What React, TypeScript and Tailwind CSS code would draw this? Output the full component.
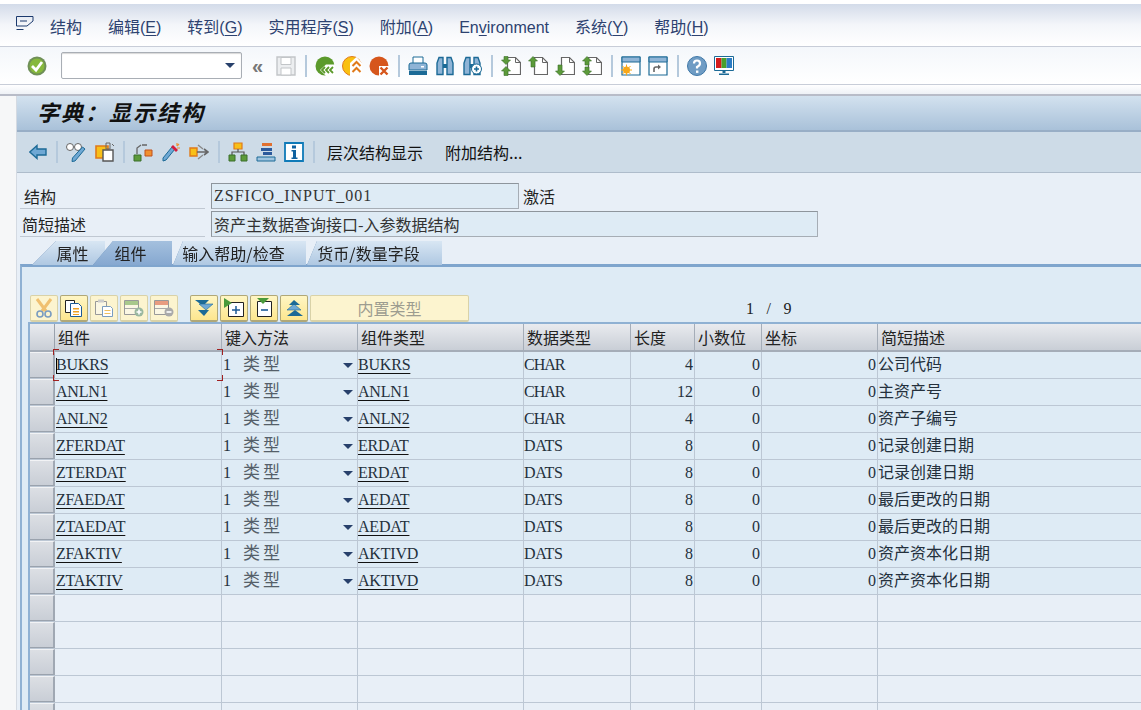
import * as React from "react"

const serif = "font-['Liberation_Serif','Noto_Sans_CJK_SC',serif]"

const rows = [
	{ name: "BUKRS", type: "BUKRS", dt: "CHAR", len: "4", desc: "公司代码" },
	{ name: "ANLN1", type: "ANLN1", dt: "CHAR", len: "12", desc: "主资产号" },
	{ name: "ANLN2", type: "ANLN2", dt: "CHAR", len: "4", desc: "资产子编号" },
	{ name: "ZFERDAT", type: "ERDAT", dt: "DATS", len: "8", desc: "记录创建日期" },
	{ name: "ZTERDAT", type: "ERDAT", dt: "DATS", len: "8", desc: "记录创建日期" },
	{ name: "ZFAEDAT", type: "AEDAT", dt: "DATS", len: "8", desc: "最后更改的日期" },
	{ name: "ZTAEDAT", type: "AEDAT", dt: "DATS", len: "8", desc: "最后更改的日期" },
	{ name: "ZFAKTIV", type: "AKTIVD", dt: "DATS", len: "8", desc: "资产资本化日期" },
	{ name: "ZTAKTIV", type: "AKTIVD", dt: "DATS", len: "8", desc: "资产资本化日期" },
]

const menus = [
	{ a: "结构", k: "", b: "" },
	{ a: "编辑(", k: "E", b: ")" },
	{ a: "转到(", k: "G", b: ")" },
	{ a: "实用程序(", k: "S", b: ")" },
	{ a: "附加(", k: "A", b: ")" },
	{ a: "En", k: "v", b: "ironment" },
	{ a: "系统(", k: "Y", b: ")" },
	{ a: "帮助(", k: "H", b: ")" },
]

function Ico({ children, w = 20 }: { children: React.ReactNode; w?: number }) {
	return (
		<svg width={w} height="20" viewBox={`0 0 ${w} 20`} className="shrink-0">
			{children}
		</svg>
	)
}

function Sep() {
	return <div className="mr-[8px] ml-[9px] h-[22px] w-[2px] shrink-0 bg-[#b5c9dc]" />
}

function PageIcon({ arrows }: { arrows: "both" | "up" | "down" | "inward" }) {
	return (
		<Ico>
			<path d="M6.500 1.500h8l5 5v12h-13z" fill="#fff" stroke="#666" strokeWidth="1.200" />
			<path d="M14.500 1.500v5h5" fill="none" stroke="#666" />
			{arrows === "inward" && (
				<>
					<path d="M5 8.500L0.500 4H3V0.500h4V4h2.500z" fill="#5c9a3a" stroke="#3a6f2a" strokeWidth="0.600" />
					<path d="M5 10.500l-4.500 4.500H3v4.500h4V15h2.500z" fill="#5c9a3a" stroke="#3a6f2a" strokeWidth="0.600" />
				</>
			)}
			{arrows === "both" && (
				<>
					<path d="M5 0.500L0.500 5H3v4h4V5h2.500z" fill="#5c9a3a" stroke="#3a6f2a" strokeWidth="0.600" />
					<path d="M5 19.500L0.500 15H3v-4h4v4h2.500z" fill="#5c9a3a" stroke="#3a6f2a" strokeWidth="0.600" />
				</>
			)}
			{arrows === "up" && <path d="M5 0.500L0.500 5H3v6h4V5h2.500z" fill="#5c9a3a" stroke="#3a6f2a" strokeWidth="0.600" />}
			{arrows === "down" && <path d="M5 19.500L0.500 15H3V9h4v6h2.500z" fill="#5c9a3a" stroke="#3a6f2a" strokeWidth="0.600" />}
		</Ico>
	)
}

function Binoc({ plus }: { plus?: boolean }) {
	return (
		<Ico>
			<path d="M2 18.500V7l2-5.500h4v17zM12 18.500v-17h4l2 5.500v11.500z" fill="#8fb4d6" stroke="#1c6a96" strokeWidth="1.400" />
			<path d="M8 8h4v4H8z" fill="#1c6a96" />
			{plus && (
				<>
					<circle cx="14.500" cy="13" r="5" fill="#fff" stroke="#1c6a96" />
					<path d="M14.500 10.500v5M12 13h5" stroke="#1c6a96" strokeWidth="1.600" />
				</>
			)}
		</Ico>
	)
}

function MainToolbar() {
	return (
		<div className="flex h-[38px] items-center border-b border-[#c8cdd8] bg-gradient-to-b from-[#f4f7fb] to-white pl-[27px]">
			<Ico>
				<circle cx="10" cy="10" r="9.500" fill="#6f8f58" />
				<circle cx="10" cy="10" r="7.500" fill="#86b83c" />
				<path d="M5 10l4 4 6-8" fill="none" stroke="#fff" strokeWidth="2.800" />
			</Ico>
			<div className="ml-[14px] flex h-[27px] w-[181px] items-center justify-end rounded-[2px] border border-[#a9aeb5] bg-white pr-[6px] shadow-[inset_0_1px_1px_#d8d8d8]">
				<div className="h-0 w-0 border-x-[5px] border-t-[5px] border-x-transparent border-t-[#27406b]" />
			</div>
			<span className="ml-[10px] w-[14px] font-['Liberation_Sans',sans-serif] text-[20px] leading-none font-bold text-[#777]">«</span>
			<div className="ml-[10px]">
				<Ico>
					<path d="M1 1h18v18H1z" fill="#eceef0" stroke="#c2c5c8" strokeWidth="1.400" />
					<path d="M5 1.500h10v7H5zM5 12h10v7H5z" fill="#fff" stroke="#c2c5c8" />
				</Ico>
			</div>
			<Sep />
			<div className="flex items-center gap-[7px]">
				<Ico>
					<circle cx="10" cy="10" r="9.500" fill="#5c9a2c" />
					<path d="M20 8.500h-9l-6 5.500 6 6h9z" fill="#fff" />
					<path d="M10 11l-3 3 3 3M14 11l-3 3 3 3M18 11l-3 3 3 3" fill="none" stroke="#5c9a2c" strokeWidth="1.800" />
				</Ico>
				<Ico>
					<circle cx="10" cy="10" r="9.500" fill="#f9c012" stroke="#e07a1a" />
					<path d="M14.500 1L20 7v13H8V7z" fill="#fff" />
					<path d="M10.500 10l4-4 4 4M10.500 16l4-4 4 4" fill="none" stroke="#e07a1a" strokeWidth="2" />
				</Ico>
				<Ico>
					<circle cx="10" cy="10" r="9.500" fill="#d6561c" />
					<path d="M10 10h10v10H10z" fill="#fff" />
					<path d="M11.500 11.500l7 7M18.500 11.500l-7 7" stroke="#d6561c" strokeWidth="2.400" />
				</Ico>
			</div>
			<Sep />
			<div className="flex items-center gap-[7px]">
				<Ico>
					<path d="M5 1h10v7H5z" fill="#fff" stroke="#1c6a96" />
					<path d="M1 9q0-2 2-2h14q2 0 2 2v5H1z" fill="#8fb4d6" stroke="#1c6a96" />
					<path d="M1 15h18v4H1z" fill="#1c6a96" />
					<path d="M13 10h3v1.500h-3z" fill="#fff" />
				</Ico>
				<Binoc />
				<Binoc plus />
			</div>
			<Sep />
			<div className="flex items-center gap-[7px]">
				<PageIcon arrows="inward" />
				<PageIcon arrows="up" />
				<PageIcon arrows="down" />
				<PageIcon arrows="both" />
			</div>
			<Sep />
			<div className="flex items-center gap-[7px]">
				<Ico>
					<path d="M1 1h18v18H1z" fill="#fff" stroke="#1c6a96" strokeWidth="1.200" />
					<path d="M1 1h18v5H1z" fill="#8fb4d6" stroke="#1c6a96" />
					<circle cx="5.500" cy="14" r="3.500" fill="#f8a818" />
					<path d="M5.500 8.500v11M0 14h11M1.500 10l8 8M9.500 10l-8 8" stroke="#f8a818" />
				</Ico>
				<Ico>
					<path d="M1 1h18v18H1z" fill="#fff" stroke="#1c6a96" strokeWidth="1.200" />
					<path d="M1 1h18v5H1z" fill="#8fb4d6" stroke="#1c6a96" />
					<path d="M6 16v-3q0-2 2-2h3" fill="none" stroke="#666" strokeWidth="1.600" />
					<path d="M10 8.500l3 2.500-3 2.500z" fill="#666" />
				</Ico>
			</div>
			<Sep />
			<div className="flex items-center gap-[7px]">
				<Ico>
					<circle cx="10" cy="10" r="9.500" fill="#6f9cc4" stroke="#3f78a8" />
					<path d="M7 7.500q0-3 3-3t3 3q0 2-3 3.500v1.500" fill="none" stroke="#fff" strokeWidth="2.200" />
					<path d="M9 14.500h2.400v2.400H9z" fill="#fff" />
				</Ico>
				<Ico>
					<path d="M0.500 0.500h19v14h-19z" fill="#fff" stroke="#1c6a96" />
					<path d="M2 2h5.500v10H2z" fill="#d41c1c" />
					<path d="M7.500 2h5v10h-5z" fill="#4aa02c" />
					<path d="M12.500 2H18v10h-5.500z" fill="#2c7cc4" />
					<path d="M8.500 15h3v2h-3zM5 17.500h10V19H5z" fill="#1c6a96" />
				</Ico>
			</div>
		</div>
	)
}

function AppToolbar() {
	return (
		<div className="flex h-[41px] items-center border-b border-[#aebccb] bg-[#cddbe7] pl-[12px] font-['Noto_Sans_CJK_SC',sans-serif] text-[16px] text-[#111]">
			<Ico w={18}>
				<path d="M0.800 10L8 3.500V7h9v6H8v3.500z" fill="#6fa8d4" stroke="#1c6a96" strokeWidth="1.400" />
			</Ico>
			<Sep />
			<div className="flex items-center gap-[9px]">
				<Ico>
					<circle cx="4" cy="5" r="3.500" fill="#fff" stroke="#666" />
					<circle cx="12" cy="5" r="3.500" fill="#fff" stroke="#666" />
					<path d="M19 7L9 19l-3 0.500 0.500-3.500L16.500 5z" fill="#6fa8d4" stroke="#1c6a96" />
				</Ico>
				<Ico>
					<path d="M1 4h12v12H1z" fill="#f8c018" stroke="#e07a1a" strokeWidth="1.600" />
					<path d="M8 8h10v11H8z" fill="#fff" stroke="#555" strokeWidth="1.400" />
					<path d="M11 1h4v6h-4z" fill="none" stroke="#666" />
					<path d="M17 2l2 2" stroke="#666" />
				</Ico>
			</div>
			<div className="-ml-[1px]">
				<Sep />
			</div>
			<div className="flex items-center gap-[8px]">
				<Ico>
					<path d="M1 13h7v6H1z" fill="#5c9a3a" stroke="#3a6f2a" />
					<path d="M12 8h7v6h-7z" fill="#f09030" stroke="#c0501c" />
					<path d="M4 12V6l4-3M9 3h5" fill="none" stroke="#666" strokeWidth="1.300" />
				</Ico>
				<Ico>
					<path d="M14 7L5 18l-3 1 0-3L11 5z" fill="#6fa8d4" stroke="#1c6a96" />
					<path d="M12 3l5 5-2 2-5-5z" fill="#d41c3c" />
					<path d="M16 1v3M19 6h-3M18 2l-2 2" stroke="#f09030" strokeWidth="1.200" />
				</Ico>
				<Ico>
					<path d="M1 6h7v8H1z" fill="#f8c018" stroke="#e07a1a" strokeWidth="1.400" />
					<path d="M8 10h10M15 7l4 3-4 3" fill="none" stroke="#666" strokeWidth="1.600" />
					<path d="M9 3l5 4M9 17l5-4" stroke="#888" strokeWidth="1.300" />
				</Ico>
			</div>
			<Sep />
			<div className="flex items-center gap-[8px]">
				<Ico>
					<path d="M6 1h8v6H6z" fill="#f8c018" stroke="#e07a1a" strokeWidth="1.200" />
					<path d="M10 7v3M4 13v-3h12v3" fill="none" stroke="#555" strokeWidth="1.200" />
					<path d="M1 13h6v6H1zM13 13h6v6h-6z" fill="#5c9a3a" stroke="#3a6f2a" />
				</Ico>
				<Ico>
					<path d="M6 1h10v3H6z" fill="#e07030" />
					<path d="M5 6h11v3H5zM7 10h9v3H7z" fill="#2c5a9c" />
					<path d="M1 15h18v4H1z" fill="#9fc4e0" stroke="#1c6a96" />
				</Ico>
				<Ico>
					<path d="M1 1h18v18H1z" fill="#fff" stroke="#0f7ab8" strokeWidth="1.800" />
					<path d="M8 3.500h4v3H8zM7.500 8H12v7.500h1.500V17h-6v-1.500H9V9.500H7.500z" fill="#0f62a0" />
				</Ico>
			</div>
			<Sep />
			<span className="ml-[4px] leading-none">层次结构显示</span>
			<span className="ml-[22px] leading-none">附加结构...</span>
		</div>
	)
}

function FormRow({ label, labelPad, value, fieldW, tail, mono }: { label: string; labelPad: string; value: string; fieldW: string; tail?: string; mono?: boolean }) {
	return (
		<div className="flex h-[26px] items-stretch">
			<div className={`flex w-[185px] items-center border-b border-[#c0c8d2] text-[#222] ${labelPad}`}>{label}</div>
			<div className={`ml-[6px] flex items-center border border-[#a6adb5] border-t-[#8e959c] border-l-[#8e959c] bg-[#deebf5] pl-[2px] text-[#333] ${fieldW} ${mono ? "tracking-[1px]" : ""}`}>
				{value}
			</div>
			{tail && <span className="ml-[4px] flex items-center text-[#222]">{tail}</span>}
		</div>
	)
}

function Tab({ label, active, cls, inner }: { label: string; active?: boolean; cls: string; inner: string }) {
	return (
		<div className={`[filter:drop-shadow(0_0_0.5px_#5f86b0)] ${cls} ${active ? "z-10" : ""}`}>
			<div className={`flex h-[24px] items-center justify-center ${active ? "bg-gradient-to-b from-[#a4c0de] to-[#86a8d0]" : "bg-gradient-to-b from-[#d8e6f3] to-[#afc8e2]"} ${inner} text-[#222]`}>
				{label}
			</div>
		</div>
	)
}

function TBtn({ children, off, cls = "w-[28px]" }: { children: React.ReactNode; off?: boolean; cls?: string }) {
	return (
		<div className={`flex h-[27px] items-center justify-center rounded-[2px] border border-b-2 ${off ? "border-[#d9d2a8] bg-[#fcf4cf]" : "border-[#b0a878] bg-gradient-to-b from-[#fff6c4] to-[#fde68e]"} ${cls}`}>
			{children}
		</div>
	)
}

function TableButtons() {
	return (
		<div className="flex h-[28px] shrink-0 items-center pl-[2px]">
			<div className="flex gap-[2px]">
				<TBtn off>
					<svg width="18" height="20" viewBox="0 0 18 20">
						<path d="M2 1l9 12M16 1L7 13" stroke="#f0c070" strokeWidth="3" />
						<circle cx="5" cy="16" r="3" fill="none" stroke="#7a9cc0" strokeWidth="1.600" />
						<circle cx="13" cy="16" r="3" fill="none" stroke="#7a9cc0" strokeWidth="1.600" />
					</svg>
				</TBtn>
				<TBtn>
					<svg width="18" height="18" viewBox="0 0 18 18">
						<path d="M0.500 1.500h9v12h-9z" fill="#fff" stroke="#222" />
						<path d="M5.500 4.500h8l3 3v10h-11z" fill="#fff" stroke="#1c5a96" />
						<path d="M8 9h6v1.500H8zM8 12h6v1.500H8zM8 15h6v1H8z" fill="#f0a020" />
					</svg>
				</TBtn>
				<TBtn off>
					<svg width="18" height="18" viewBox="0 0 18 18">
						<path d="M0.500 2.500h11v13h-11z" fill="#fbf7e4" stroke="#999" />
						<path d="M3 0.500h6v3H3z" fill="#ccc" />
						<path d="M7.500 7.500h8l2 2v8h-10z" fill="#fff" stroke="#7a9cc0" />
						<path d="M9.500 11h6v1h-6zM9.500 14h6v1h-6z" fill="#f0c060" />
					</svg>
				</TBtn>
				<TBtn off>
					<svg width="20" height="18" viewBox="0 0 20 18">
						<path d="M0.500 1.500h14v14h-14z" fill="#fbf7e4" stroke="#999" />
						<path d="M1 2h13v4H1z" fill="#a8c88c" />
						<path d="M1 9h13v1H1z" fill="#aaa" />
						<circle cx="15" cy="13" r="4.500" fill="#9ab8a0" />
						<path d="M15 10.500v5M12.500 13h5" stroke="#fff" strokeWidth="1.600" />
					</svg>
				</TBtn>
				<TBtn off>
					<svg width="20" height="18" viewBox="0 0 20 18">
						<path d="M0.500 1.500h14v14h-14z" fill="#fbf7e4" stroke="#999" />
						<path d="M1 2h13v4H1z" fill="#e89c80" />
						<path d="M1 9h13v1H1z" fill="#aaa" />
						<circle cx="15" cy="13" r="4.500" fill="#aaa" />
						<path d="M12.500 13h5" stroke="#fff" strokeWidth="1.600" />
					</svg>
				</TBtn>
			</div>
			<div className="ml-[12px] flex gap-[2px]">
				<TBtn>
					<svg width="20" height="18" viewBox="0 0 20 18">
						<path d="M1 1h14L9 7z" fill="#1c6a96" />
						<path d="M5 5h14l-7 6z" fill="#6fa8d4" stroke="#1c6a96" strokeWidth="0.600" />
						<path d="M4 11h11l-5 6z" fill="#1c6a96" />
					</svg>
				</TBtn>
				<TBtn>
					<svg width="20" height="19" viewBox="0 0 20 19">
						<path d="M4.500 4.500h15v14h-15z" fill="#fff" stroke="#222" />
						<path d="M0 0l8 5-8 5z" fill="#4a9a3a" />
						<path d="M12 8v8M8 12h8" stroke="#1c5a96" strokeWidth="1.500" />
					</svg>
				</TBtn>
				<TBtn>
					<svg width="20" height="19" viewBox="0 0 20 19">
						<path d="M3.500 3.500h14v15h-14z" fill="#fff" stroke="#222" />
						<path d="M3 0h12l-6 6z" fill="#4a9a3a" />
						<path d="M7 12h7" stroke="#1c5a96" strokeWidth="1.600" />
					</svg>
				</TBtn>
				<TBtn>
					<svg width="20" height="18" viewBox="0 0 20 18">
						<path d="M3 17h16l-8-6z" fill="#1c6a96" />
						<path d="M3 11h14l-7-6z" fill="#6fa8d4" stroke="#1c6a96" strokeWidth="0.600" />
						<path d="M5 6h11L10 1z" fill="#1c6a96" />
					</svg>
				</TBtn>
			</div>
			<div className="ml-[2px]">
				<TBtn off cls="w-[159px] text-[#9c9c90]">内置类型</TBtn>
			</div>
			<span className={`mt-[2px] ml-[277px] ${serif} text-[16px] tracking-[1.500px] whitespace-pre text-[#222]`}>1  /  9</span>
		</div>
	)
}

const cols = ["w-[167px]", "w-[136px]", "w-[166px]", "w-[107px]", "w-[64px]", "w-[67px]", "w-[116px]", "flex-1"]

function HeaderRow() {
	const titles = ["组件", "键入方法", "组件类型", "数据类型", "长度", "小数位", "坐标", "简短描述"]
	return (
		<div className="flex h-[28px] border-b-2 border-[#a5adb8] bg-gradient-to-b from-[#e9ebef] to-[#c9ced6] text-[#222]">
			<div className="w-[25px] shrink-0 border-r border-[#9aa2ad]" />
			{titles.map((t, i) => (
				<div key={i} className={`flex shrink-0 items-center pl-[3px] ${i < 7 ? "border-r border-[#a5adb8]" : ""} ${cols[i]}`}>
					{t}
				</div>
			))}
		</div>
	)
}

function RowHead() {
	return <div className="w-[25px] shrink-0 border-t border-r-2 border-b border-t-[#f2f3f5] border-r-[#a0a8b3] border-b-[#9aa2ad] bg-gradient-to-b from-[#dcdfe4] to-[#c9ced6]" />
}

function DataRow({ row, first }: { row: (typeof rows)[number]; first?: boolean }) {
	return (
		<div className={`relative flex h-[27px] border-b border-[#bcc7d4] bg-[#deebf5] text-[#24303c] ${first ? "z-10" : ""} ${serif}`}>
			<RowHead />
			<div className={`flex shrink-0 items-center border-r border-[#bcc7d4] pl-[1px] ${cols[0]}`}>
				<span className="tracking-[-0.2px] underline decoration-[#111] underline-offset-[3px]">{row.name}</span>
			</div>
			<div className={`flex shrink-0 items-center justify-between border-r border-[#bcc7d4] pr-[4px] ${cols[1]}`}>
				<span className="flex items-center pl-[1px]">
					1<span className="ml-[12px] text-[17px] tracking-[3px] text-[#555f69]">类型</span>
				</span>
				<span className="h-0 w-0 border-x-[5px] border-t-[5px] border-x-transparent border-t-[#27406b]" />
			</div>
			<div className={`flex shrink-0 items-center border-r border-[#bcc7d4] ${cols[2]}`}>
				<span className="tracking-[-0.2px] underline decoration-[#111] underline-offset-[3px]">{row.type}</span>
			</div>
			<div className={`flex shrink-0 items-center border-r border-[#bcc7d4] ${row.dt === "CHAR" ? "tracking-[-1px]" : "tracking-[-0.4px]"} ${cols[3]}`}>{row.dt}</div>
			<div className={`flex shrink-0 items-center justify-end border-r border-[#bcc7d4] pr-[1px] ${cols[4]}`}>{row.len}</div>
			<div className={`flex shrink-0 items-center justify-end border-r border-[#bcc7d4] pr-[1px] ${cols[5]}`}>0</div>
			<div className={`flex shrink-0 items-center justify-end border-r border-[#bcc7d4] pr-[1px] ${cols[6]}`}>0</div>
			<div className={`flex items-center ${cols[7]}`}>{row.desc}</div>
			{first && (
				<>
					<div className="absolute top-[-3px] left-[23px] h-[6px] w-[6px] border-t border-l border-[#a02020]" />
					<div className="absolute top-[-3px] left-[187px] h-[6px] w-[6px] border-t border-r border-[#a02020]" />
					<div className="absolute bottom-[-3px] left-[23px] h-[6px] w-[6px] border-b border-l border-[#a02020]" />
					<div className="absolute bottom-[-3px] left-[187px] h-[6px] w-[6px] border-b border-r border-[#a02020]" />
					<div className="absolute top-[6px] left-[26px] h-[16px] w-[1px] bg-black" />
				</>
			)}
		</div>
	)
}

function BlankRow() {
	return (
		<div className="flex h-[27px] shrink-0 border-b border-[#bcc7d4] bg-[#e8eff7]">
			<RowHead />
			{cols.map((c, i) => (
				<div key={i} className={`shrink-0 ${i < 7 ? "border-r border-[#bcc7d4]" : ""} ${c}`} />
			))}
		</div>
	)
}

export default function App() {
	return (
		<div className="flex h-[710px] w-[1141px] flex-col overflow-hidden bg-[#f6f7f8] font-['Noto_Sans_CJK_SC',sans-serif] text-[16px]">
			{/* menu bar */}
			<div className="flex h-[47px] shrink-0 items-center border-t-[4px] border-b border-t-white border-b-[#c8cdd8] bg-gradient-to-b from-[#d3dbe9] via-[#f4f6fa] to-white pl-[16px]">
				<svg width="18" height="14" viewBox="0 0 18 14" className="mb-[4px] shrink-0">
					<path d="M0.500 0.500h16.500l0 4.500-6 5H0.500zM0.500 13.500h7M4 5h7" fill="none" stroke="#1c3a6e" strokeWidth="1" />
				</svg>
				<div className="mt-[6px] ml-[16px] flex gap-[26px] font-['Liberation_Sans','Noto_Sans_CJK_SC',sans-serif] leading-none text-[#2d4270]">
					{menus.map((m) => (
						<span key={m.a}>
							{m.a}
							{m.k && <span className="underline underline-offset-2">{m.k}</span>}
							{m.b}
						</span>
					))}
				</div>
			</div>
			<MainToolbar />
			<div className="h-[11px] shrink-0 border-b-2 border-[#b8bcc8] bg-gradient-to-b from-white to-[#eef1f6]" />

			{/* main area */}
			<div className="ml-[16px] flex min-h-0 flex-1 flex-col border-l border-[#d4dae2]">
				<div className="flex h-[36px] shrink-0 items-center border-b-2 border-[#98aec6] bg-gradient-to-b from-[#d3e2ef] to-[#a9c1d9] pb-[4px] pl-[20px] text-[22px] font-bold tracking-[2px] text-[#111] italic">
					字典：显示结构
				</div>
				<AppToolbar />
				<div className="flex min-h-0 flex-1 flex-col bg-[#e8eff7] pt-[10px] pl-[3px]">
					<FormRow label="结构" labelPad="pl-[4px]" value="ZSFICO_INPUT_001" fieldW={`w-[308px] ${serif}`} tail="激活" mono />
					<div className="mt-[2px]">
						<FormRow label="简短描述" labelPad="pl-[2px]" value="资产主数据查询接口-入参数据结构" fieldW="w-[607px]" />
					</div>
					{/* tabs */}
					<div className="mt-[4px] flex h-[23px] shrink-0 pl-[12px]">
						<Tab label="属性" cls="w-[73px]" inner="pl-[8px] [clip-path:polygon(24px_0,100%_0,100%_100%,0_100%)]" />
						<Tab label="组件" active cls="-ml-[12px] w-[79px]" inner="pr-[4px] [clip-path:polygon(20px_0,100%_0,100%_100%,0_100%)]" />
						<Tab label="输入帮助/检查" cls="ml-[1px] w-[133px]" inner="pr-[12px] [clip-path:polygon(10px_0,100%_0,100%_100%,0_100%)]" />
						<Tab label="货币/数量字段" cls="ml-[1px] w-[135px]" inner="pr-[12px] [clip-path:polygon(10px_0,100%_0,100%_100%,0_100%)]" />
					</div>
					{/* tab panel */}
					<div className="flex min-h-0 flex-1 flex-col border-t-[3px] border-l-2 border-t-[#7fa5cd] border-l-[#8fb1d3] bg-[#deebf5] pt-[27px] pl-[6px]">
						<TableButtons />
						<div className="shrink-0 border-t-2 border-l-2 border-t-[#8fb1d3] border-l-[#8fb1d3]">
							<HeaderRow />
							{rows.map((r, i) => (
								<DataRow key={r.name} row={r} first={i === 0} />
							))}
							<BlankRow />
							<BlankRow />
							<BlankRow />
							<BlankRow />
							<BlankRow />
						</div>
					</div>
				</div>
			</div>
		</div>
	)
}
